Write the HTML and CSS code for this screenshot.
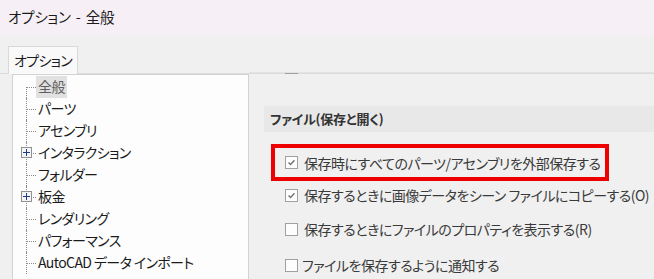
FILE: index.html
```html
<!DOCTYPE html>
<html lang="ja">
<head>
    <meta charset="UTF-8">
    <title>オプション - 全般</title>
    <link rel="stylesheet" href="styles.css">
</head>
<body>
    <div class="titlebar">オプション - 全般</div>
    <div class="window">
        <div class="tabs">
            <div class="tab">オプション</div>
        </div>
        <div class="content">
            <div class="tree">
                <div class="node first"><span class="label selected">全般</span></div>
                <div class="node"><span class="label">パーツ</span></div>
                <div class="node"><span class="label">アセンブリ</span></div>
                <div class="node"><span class="expander"></span><span class="label">インタラクション</span></div>
                <div class="node"><span class="label">フォルダー</span></div>
                <div class="node"><span class="expander"></span><span class="label">板金</span></div>
                <div class="node"><span class="label">レンダリング</span></div>
                <div class="node"><span class="label">パフォーマンス</span></div>
                <div class="node"><span class="label">AutoCAD データ インポート</span></div>
            </div>
            <div class="pane">
                <div class="option cut"><span class="check"></span></div>
                <div class="section">ファイル(保存と開く)</div>
                <div class="option highlight">
                    <span class="check on"><svg viewBox="0 0 13 13"><path d="M3 6.5l2.4 2.4 4.6-5"/></svg></span>
                    <span>保存時にすべてのパーツ/アセンブリを外部保存する</span>
                </div>
                <div class="option second">
                    <span class="check on"><svg viewBox="0 0 13 13"><path d="M3 6.5l2.4 2.4 4.6-5"/></svg></span>
                    <span>保存するときに画像データをシーン ファイルにコピーする(O)</span>
                </div>
                <div class="option third">
                    <span class="check"></span>
                    <span>保存するときにファイルのプロパティを表示する(R)</span>
                </div>
                <div class="option fourth">
                    <span class="check"></span>
                    <span>ファイルを保存するように通知する</span>
                </div>
            </div>
        </div>
    </div>
</body>
</html>
```

FILE: styles.css
```css
body {
    margin: 0;
    height: 279px;
    overflow: hidden;
    font-family: 'Noto Sans CJK JP', 'Noto Sans', sans-serif;
    font-feature-settings: "palt";
    background-color: #f0f0f0;
    color: #1b1b1b;
    display: flex;
    flex-direction: column;
}

.titlebar {
    height: 35px;
    padding-left: 8px;
    background-color: #f7eff6;
    font-size: 14.5px;
    letter-spacing: -0.2px;
    word-spacing: 2px;
    line-height: 34px;
}

.window {
    flex: 1;
    display: flex;
    flex-direction: column;
    min-height: 0;
}

.tabs {
    display: flex;
    padding: 11px 0 0 8px;
    border-bottom: 1px solid #dcdcdc;
}

.tab {
    height: 28px;
    box-sizing: border-box;
    padding: 0 5px;
    margin-bottom: -1px;
    background-color: #f9f9f9;
    border: 1px solid #d9d9d9;
    border-bottom: none;
    font-size: 14px;
    letter-spacing: -0.7px;
    line-height: 27px;
}

.content {
    flex: 1;
    display: flex;
    min-height: 0;
}

/* tree on the left */
.tree {
    width: 237px;
    box-sizing: border-box;
    margin-left: 12px;
    padding-top: 1px;
    background-color: #fdfdfd;
    border: 1px solid #d2d2d2;
    border-bottom: none;
    font-size: 14px;
    letter-spacing: -0.6px;
}

.node {
    position: relative;
    height: 22px;
    display: flex;
    align-items: center;
    padding-left: 23px;
}

.node::before {
    content: '';
    position: absolute;
    left: 13px;
    top: 0;
    bottom: 0;
    border-left: 1px dotted #8a8a8a;
}

.node.first::before {
    top: 11px;
}

.node::after {
    content: '';
    position: absolute;
    left: 14px;
    top: 11px;
    width: 9px;
    border-top: 1px dotted #8a8a8a;
}

.label {
    height: 22px;
    line-height: 21px;
    padding: 0 2px;
    white-space: nowrap;
}

.label.selected {
    background-color: #e1e1e1;
    color: #5f5f5f;
}

.expander {
    position: absolute;
    left: 8px;
    top: 5px;
    width: 11px;
    height: 11px;
    box-sizing: border-box;
    border: 1px solid #909090;
    background: linear-gradient(#1f3c86, #1f3c86) center / 7px 1px no-repeat,
                linear-gradient(#1f3c86, #1f3c86) center / 1px 7px no-repeat,
                #f4f4f4;
    z-index: 1;
}

/* options on the right */
.pane {
    flex: 1;
    overflow: hidden;
    border-top: 1px solid #e2e2e2;
    margin-top: -2px;
    color: #3a3a3a;
    font-size: 14px;
    letter-spacing: -0.5px;
}

.option {
    display: flex;
    align-items: center;
    gap: 6px;
    height: 20px;
    padding-left: 36px;
    white-space: nowrap;
}

.option.cut {
    margin-top: -16px;
}

.check {
    width: 13px;
    height: 13px;
    box-sizing: border-box;
    border: 1px solid #a0a0a0;
    background-color: #fdfdfd;
    flex: none;
    display: flex;
}

.check svg {
    width: 11px;
    height: 11px;
    fill: none;
    stroke: #707070;
    stroke-width: 1.6;
}

.section {
    margin: 29px 0 0 15px;
    height: 26px;
    padding-left: 6px;
    background-color: #e8e8e8;
    color: #333333;
    font-size: 13px;
    letter-spacing: -0.2px;
    font-weight: bold;
    line-height: 25px;
}

.option.highlight {
    width: 338px;
    height: 37px;
    box-sizing: border-box;
    margin: 12px 0 0 22px;
    padding-left: 10px;
    border: 4px solid #ee0000;
}

.option.second {
    margin-top: 4px;
}

.option.third {
    margin-top: 14px;
}

.option.fourth {
    margin-top: 16px;
    gap: 4px;
}
```
